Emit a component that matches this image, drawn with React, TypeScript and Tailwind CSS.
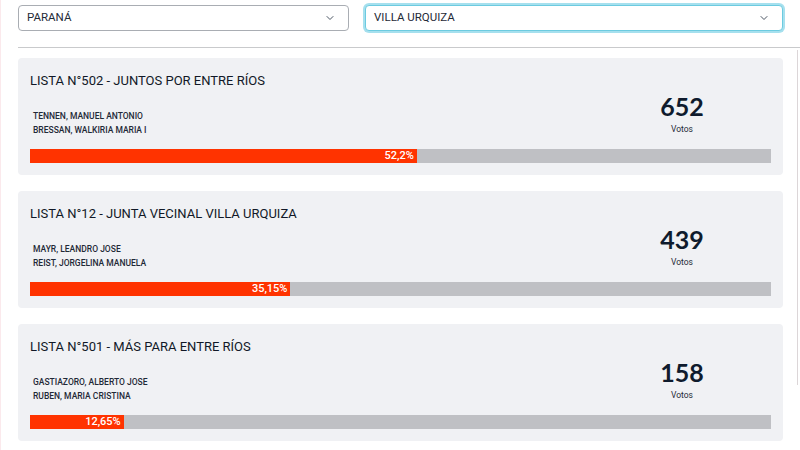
import { ChevronDown } from "lucide-react";

type Lista = {
  title: string;
  candidates: string[];
  votes: number;
  percent: number;
  label: string;
};

const listas: Lista[] = [
  {
    title: "LISTA N°502 - JUNTOS POR ENTRE RÍOS",
    candidates: ["TENNEN, MANUEL ANTONIO", "BRESSAN, WALKIRIA MARIA I"],
    votes: 652,
    percent: 52.2,
    label: "52,2%",
  },
  {
    title: "LISTA N°12 - JUNTA VECINAL VILLA URQUIZA",
    candidates: ["MAYR, LEANDRO JOSE", "REIST, JORGELINA MANUELA"],
    votes: 439,
    percent: 35.15,
    label: "35,15%",
  },
  {
    title: "LISTA N°501 - MÁS PARA ENTRE RÍOS",
    candidates: ["GASTIAZORO, ALBERTO JOSE", "RUBEN, MARIA CRISTINA"],
    votes: 158,
    percent: 12.65,
    label: "12,65%",
  },
];

const Select = ({ value, focused }: { value: string; focused?: boolean }) => (
  <div
    className={`flex h-[26px] items-center justify-between rounded-[4px] border bg-white pl-[8px] pr-[12px] ${
      focused
        ? "flex-1 border-[#6ccbe0] shadow-[0_0_0_2px_#a6e0ee]"
        : "w-[331px] border-[#a9adb3]"
    }`}
  >
    <span className="text-[11.5px] text-[#1f2a37]">{value}</span>
    <ChevronDown className="h-3 w-3 text-[#4b5563]" strokeWidth={2} />
  </div>
);

const ListaCard = ({ lista }: { lista: Lista }) => (
  <div className="flex h-[117px] flex-col rounded-[4px] bg-[#f0f1f4] px-[12px] pb-[12px] pt-[13px]">
    <div className="text-[13px] leading-5 text-[#111827]">{lista.title}</div>
    <div className="flex items-start justify-between">
      <div className="mt-[18px] pl-[3px] text-[8.5px] font-medium leading-[14px] text-[#1f2937]">
        {lista.candidates.map((c) => (
          <div key={c}>{c}</div>
        ))}
      </div>
      <div className="mr-[49px] flex w-[80px] flex-col items-center">
        <div className="font-[Lato,sans-serif] text-[25px] font-bold leading-[30px] text-[#0f1b2d]">
          {lista.votes}
        </div>
        <div className="mt-[2px] text-[8.5px] leading-3 text-[#1f2937]">Votos</div>
      </div>
    </div>
    <div className="mt-auto flex h-[14px] bg-[#bfc0c4]">
      <div
        className="flex items-center justify-end bg-[#ff3300] pr-[3px] text-[11px] font-medium text-white"
        style={{ width: `${lista.percent}%` }}
      >
        {lista.label}
      </div>
    </div>
  </div>
);

export default function App() {
  return (
    <div
      className="relative h-[450px] w-[800px] overflow-hidden border-l border-[#fbe9ec] bg-white"
      style={{ fontFamily: 'Roboto, "Open Sans", sans-serif' }}
    >
      <div className="pl-[17px] pr-[17px] pt-[5px]">
        <div className="flex gap-4">
          <Select value="PARANÁ" />
          <Select value="VILLA URQUIZA" focused />
        </div>
        <div className="-mr-[17px] mt-4 border-t border-[#c9cacc]" />
        <div className="mt-[10px] flex flex-col gap-4">
          {listas.map((l) => (
            <ListaCard key={l.title} lista={l} />
          ))}
        </div>
      </div>
      <div className="absolute right-[2px] top-[50px] h-[335px] w-px bg-[#dcd6d8]" />
    </div>
  );
}
